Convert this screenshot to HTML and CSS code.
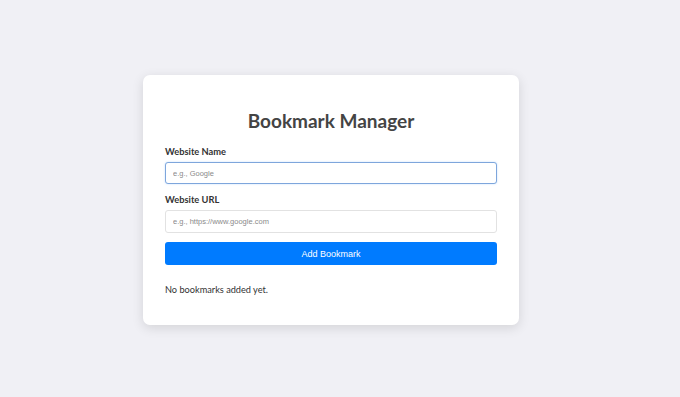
FILE: index.html
```html
<!DOCTYPE html>
<html lang="en">
<head>
  <meta charset="UTF-8" />
  <meta name="viewport" content="width=device-width, initial-scale=1" />
  <title>Bookmark Manager</title>
  <link rel="stylesheet" href="styles.css">
</head>
<body>
  <div class="container">
    <h2>Bookmark Manager</h2>
    <form id="bookmark-form">
      <label for="site-name">Website Name</label>
      <input type="text" id="site-name" class="focused" placeholder="e.g., Google" />

      <label for="site-url">Website URL</label>
      <input type="url" id="site-url" placeholder="e.g., https://www.google.com" />

      <button type="submit">Add Bookmark</button>
    </form>
    <p id="bookmark-list" class="empty">No bookmarks added yet.</p>
  </div>
</body>
</html>
```

FILE: styles.css
```css
body {
  font-family: 'Lato', 'Open Sans', sans-serif;
  background-color: #f0f0f5;
  margin: 0;
  padding-right: 18px;
  height: 397px;
  display: flex;
  align-items: center;
  justify-content: center;
}
.container {
  width: 332px;
  background: white;
  padding: 22px 22px 29px;
  border-radius: 7px;
  box-shadow: 0 3px 12px rgba(0,0,0,0.12);
  margin-top: 3px;
}
h2 {
  margin: 11px 0 13px;
  font-size: 19px;
  line-height: 25px;
  color: #444;
  text-align: center;
}
label {
  display: block;
  margin: 0 0 4px;
  font-size: 9.3px;
  line-height: 12px;
  font-weight: bold;
  color: #333;
}
input {
  display: block;
  width: 100%;
  height: 22px;
  padding: 0 7px;
  margin-bottom: 10px;
  border-radius: 3px;
  border: 1px solid #e2e2e2;
  box-sizing: border-box;
  font-family: 'Liberation Sans', Arial, sans-serif;
  font-size: 7.5px;
  outline: none;
}
input.focused {
  border-color: #7ea6dc;
  box-shadow: 0 0 2px rgba(0,123,255,0.25);
}
input::placeholder {
  color: #8a8a8a;
}
#site-url {
  height: 23px;
  margin-bottom: 9px;
}
button {
  display: block;
  width: 100%;
  height: 23px;
  background-color: #007bff;
  color: white;
  border: none;
  border-radius: 3px;
  font-family: 'Liberation Sans', Arial, sans-serif;
  font-size: 9px;
  cursor: pointer;
}
.empty {
  margin: 19px 0 0;
  font-size: 9.2px;
  line-height: 12px;
  color: #333;
}
```
